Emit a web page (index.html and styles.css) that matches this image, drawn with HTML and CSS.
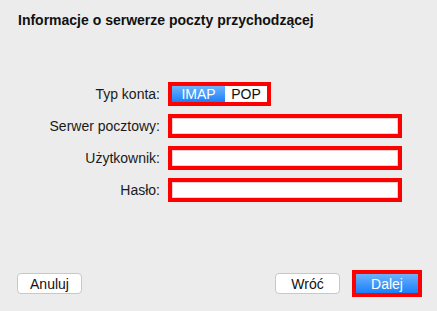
FILE: index.html
```html
<!DOCTYPE html>
<html lang="pl">
<head>
    <meta charset="UTF-8">
    <title>Informacje o serwerze poczty przychodzącej</title>
    <link rel="stylesheet" href="styles.css">
</head>
<body>
    <div class="sheet">
        <h2 class="title">Informacje o serwerze poczty przychodzącej</h2>

        <form class="account-form">
            <label class="field-label">Typ konta:</label>
            <div class="mark mark-segment">
                <div class="segmented">
                    <span class="segment active">IMAP</span>
                    <span class="segment">POP</span>
                </div>
            </div>

            <label class="field-label">Serwer pocztowy:</label>
            <div class="mark"><input type="text" class="text-input"></div>

            <label class="field-label">Użytkownik:</label>
            <div class="mark"><input type="text" class="text-input"></div>

            <label class="field-label">Hasło:</label>
            <div class="mark"><input type="password" class="text-input"></div>
        </form>

        <div class="footer">
            <button type="button" class="btn">Anuluj</button>
            <div class="footer-right">
                <button type="button" class="btn">Wróć</button>
                <div class="mark mark-button">
                    <button type="button" class="btn btn-primary">Dalej</button>
                </div>
            </div>
        </div>
    </div>
</body>
</html>
```

FILE: styles.css
```css
body {
    margin: 0;
    background: #ececec;
    font-family: "Liberation Sans", Arial, sans-serif;
    font-size: 14px;
    color: #111;
}

.sheet {
    height: 311px;
    display: flex;
    flex-direction: column;
    box-sizing: border-box;
}

.title {
    margin: 0;
    padding: 12px 0 0 18px;
    font-size: 14px;
    font-weight: bold;
    line-height: 17px;
}

.account-form {
    display: grid;
    grid-template-columns: 160px 234px;
    column-gap: 8px;
    row-gap: 8px;
    margin-top: 53px;
    align-items: center;
}

.field-label {
    text-align: right;
    color: #1a1a1a;
}

.mark {
    border: 4px solid #ff0000;
    height: 24px;
    box-sizing: border-box;
    background: #ff0000;
}

.mark-segment {
    width: 103px;
    height: 24px;
    padding: 0;
}

.segmented {
    display: flex;
    height: 16px;
    background: #fff;
}

.segment {
    width: 42px;
    text-align: center;
    line-height: 16px;
    color: #111;
}

.segment.active {
    width: 53px;
    color: #fff;
    background: linear-gradient(#6db3fb, #1c80fa);
}

.text-input {
    display: block;
    width: 100%;
    height: 16px;
    margin: 0;
    padding: 0;
    border: none;
    box-sizing: border-box;
    background: #fff;
    box-shadow: inset 0 0 0 1px #f6d0d0;
    outline: none;
}

.footer {
    margin-top: auto;
    display: flex;
    justify-content: space-between;
    align-items: center;
    padding: 0 15px 14px 17px;
}

.footer-right {
    display: flex;
    align-items: center;
    gap: 12px;
}

.btn {
    width: 65px;
    height: 21px;
    padding: 0;
    border: 1px solid #c8c8c8;
    border-radius: 4px;
    background: #fff;
    font-family: inherit;
    font-size: 14px;
    color: #111;
}

.mark-button {
    width: 70px;
    height: 27px;
}

.btn-primary {
    display: block;
    width: 62px;
    height: 19px;
    border: none;
    border-radius: 0;
    color: #fff;
    background: linear-gradient(#6cb2fb, #1b7ffa);
}
```
